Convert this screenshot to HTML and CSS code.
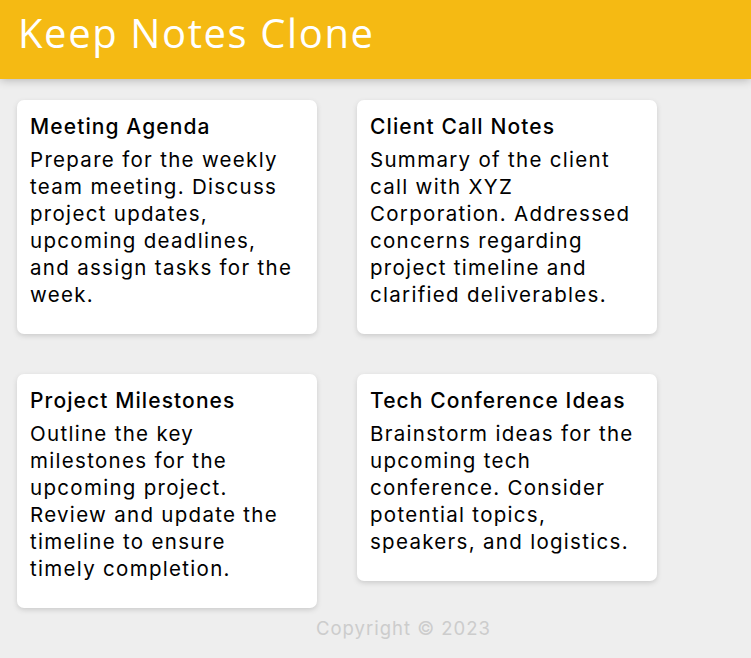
FILE: index.html
```html
<!DOCTYPE html>
<html lang="en">
<head>
<meta charset="utf-8">
<title>Keep Notes Clone</title>
<link rel="stylesheet" href="styles.css">
</head>
<body>
<header class="app-header">
  <h1 class="app-title">Keep Notes Clone</h1>
</header>
<main class="notes">
  <article class="note">
    <h2 class="note-title">Meeting Agenda</h2>
    <p class="note-body">Prepare for the weekly team meeting. Discuss project updates, upcoming deadlines, and assign tasks for the week.</p>
  </article>
  <article class="note">
    <h2 class="note-title">Client Call Notes</h2>
    <p class="note-body">Summary of the client call with XYZ Corporation. Addressed concerns regarding project timeline and clarified deliverables.</p>
  </article>
  <article class="note">
    <h2 class="note-title">Project Milestones</h2>
    <p class="note-body">Outline the key milestones for the upcoming project. Review and update the timeline to ensure timely completion.</p>
  </article>
  <article class="note">
    <h2 class="note-title">Tech Conference Ideas</h2>
    <p class="note-body">Brainstorm ideas for the upcoming tech conference. Consider potential topics, speakers, and logistics.</p>
  </article>
</main>
<footer class="app-footer">
  <p class="copyright">Copyright © 2023</p>
</footer>
</body>
</html>
```
FILE: styles.css
```css
* { margin: 0; padding: 0; box-sizing: border-box; }
html { font-family: Inter, "Noto Sans", sans-serif; }
body { background: #eeeeee; min-height: 658px; }
.app-header {
  background: #f5ba13;
  height: 79px;
  padding: 8px 18px 0;
  box-shadow: 0 0 10px 0 rgba(0,0,0,0.3);
}
.app-title {
  color: #fff;
  font-family: "Open Sans", sans-serif;
  font-weight: 400;
  font-size: 40px;
  line-height: 50px;
  letter-spacing: 1.6px;
}
.notes {
  display: flex;
  flex-wrap: wrap;
  align-items: flex-start;
  column-gap: 40px;
  row-gap: 40px;
  padding: 21px 0 0 17px;
  width: 720px;
}
.note {
  width: 300px;
  background: #fff;
  border-radius: 7px;
  box-shadow: 0 2px 5px #ccc;
  padding: 12px 21px 26px 13px;
}
.note-title {
  font-size: 21px;
  font-weight: 500;
  line-height: 30px;
  letter-spacing: 1.1px;
  color: #000;
  margin-bottom: 4px;
  white-space: nowrap;
}
.note-body {
  font-size: 20.5px;
  line-height: 27px;
  letter-spacing: 1.3px;
  color: #000;
}
.app-footer {
  text-align: center;
  padding: 8px 0 0 56px;
}
.copyright {
  color: #ccc;
  font-size: 18.5px;
  line-height: 24px;
  letter-spacing: 1px;
}
```
